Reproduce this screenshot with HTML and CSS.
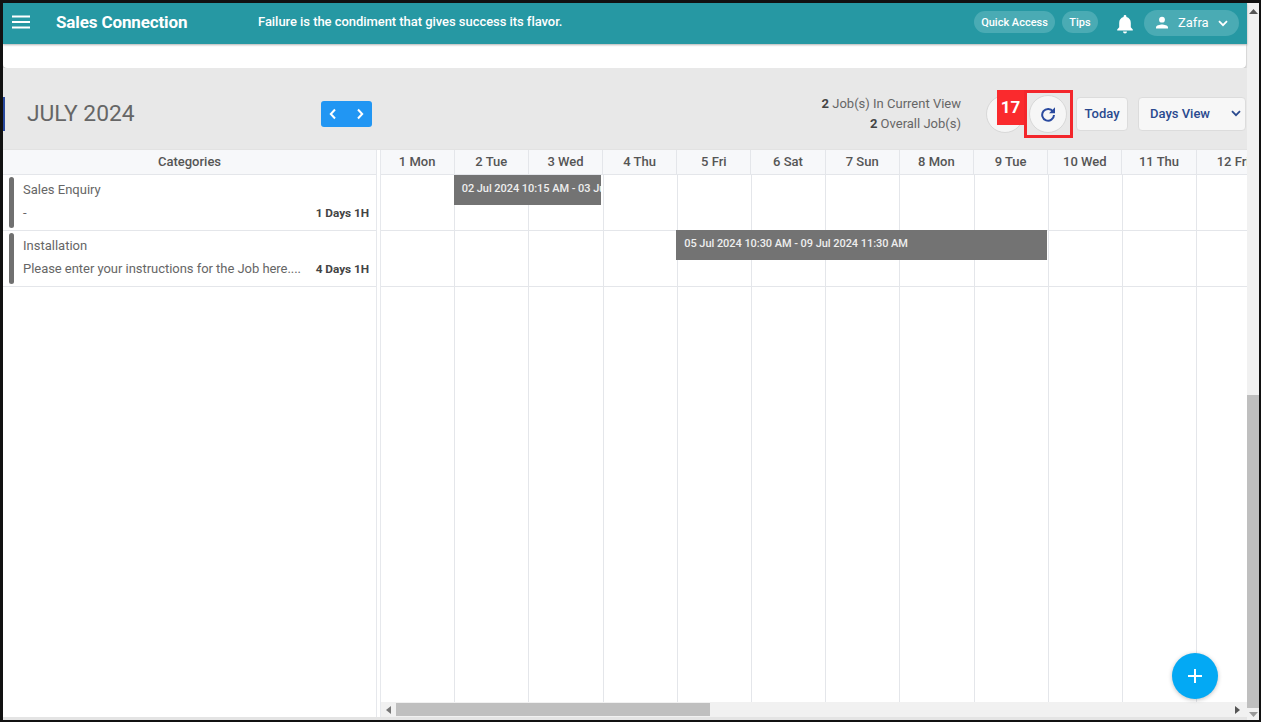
FILE: index.html
```html
<!DOCTYPE html>
<html lang="en">
<head>
<meta charset="UTF-8">
<title>Sales Connection</title>
<link rel="stylesheet" href="styles.css">
</head>
<body>

<div class="frame">
    <div class="page">
        <header class="topbar">
            <svg class="menu-icon" width="20" height="16" viewBox="0 0 20 16"><path d="M1 2.500h18M1 8h18M1 13.500h18" stroke="#fff" stroke-width="2"/></svg>
            <span class="brand">Sales Connection</span>
            <span class="quote">Failure is the condiment that gives success its flavor.</span>
            <span class="pill quick">Quick Access</span>
            <span class="pill tips">Tips</span>
            <svg class="bell" width="18" height="20" viewBox="0 0 18 20"><path d="M9 1a1.400 1.400 0 0 1 1.400 1.400v.7c2.900.7 4.400 3 4.400 5.900v4.200L16.800 15.500v1H1.200v-1L3.200 13.200V9c0-2.900 1.500-5.200 4.400-5.900v-.7A1.400 1.400 0 0 1 9 1zM7 17.500h4a2 2 0 0 1-4 0z" fill="#fff"/></svg>
            <span class="user">
                <svg width="14" height="14" viewBox="0 0 14 14"><circle cx="7" cy="3.700" r="2.900" fill="#fff"/><path d="M1 12.500v-1.300C1 9.300 4.900 8.400 7 8.400s6 .9 6 2.800v1.300z" fill="#fff"/></svg>
                <span class="user-name">Zafra</span>
                <svg width="10" height="7" viewBox="0 0 10 7"><path d="M1 1.200l4 4 4-4" fill="none" stroke="#fff" stroke-width="1.800"/></svg>
            </span>
        </header>

        <div class="blank-card"></div>

        <div class="toolbar">
            <h1 class="month">JULY 2024</h1>
            <div class="nav-btns">
                <svg width="8" height="12" viewBox="0 0 8 12"><path d="M6 1.500L1.800 6 6 10.500" fill="none" stroke="#fff" stroke-width="2"/></svg>
                <svg width="8" height="12" viewBox="0 0 8 12"><path d="M2 1.500L6.200 6 2 10.500" fill="none" stroke="#fff" stroke-width="2"/></svg>
            </div>
            <div class="job-counts">
                <div><b>2</b> Job(s) In Current View</div>
                <div><b>2</b> Overall Job(s)</div>
            </div>
            <div class="round-btn first"></div>
            <div class="round-btn second">
                <svg width="16" height="16" viewBox="0 0 16 16"><path d="M13 5.500A5.900 5.900 0 1 0 14 9" fill="none" stroke="#2a4a9f" stroke-width="2"/><path d="M15 1.200v6H9z" fill="#2a4a9f"/></svg>
            </div>
            <div class="today">Today</div>
            <div class="view-select">
                <span>Days View</span>
                <svg width="10" height="7" viewBox="0 0 10 7"><path d="M1 1.200l4 4 4-4" fill="none" stroke="#2a4a8f" stroke-width="1.800"/></svg>
            </div>
            <div class="mark-box"></div>
            <div class="mark-num">17</div>
        </div>

        <div class="planner">
            <div class="categories">
                <div class="cat-head">Categories</div>
                <div class="cat-row">
                    <div class="cat-bar"></div>
                    <div class="cat-text">
                        <div class="cat-name">Sales Enquiry</div>
                        <div class="cat-line"><span>-</span><b>1 Days 1H</b></div>
                    </div>
                </div>
                <div class="cat-row">
                    <div class="cat-bar"></div>
                    <div class="cat-text">
                        <div class="cat-name">Installation</div>
                        <div class="cat-line"><span>Please enter your instructions for the Job here....</span><b>4 Days 1H</b></div>
                    </div>
                </div>
            </div>

            <div class="timeline">
                <div class="days">
                    <div>1 Mon</div><div>2 Tue</div><div>3 Wed</div><div>4 Thu</div>
                    <div>5 Fri</div><div>6 Sat</div><div>7 Sun</div><div>8 Mon</div>
                    <div>9 Tue</div><div>10 Wed</div><div>11 Thu</div><div>12 Fri</div>
                </div>
                <div class="grid-body">
                    <div class="job-row">
                        <div class="job job-one">02 Jul 2024 10:15 AM - 03 Jul 2024 11:15 AM</div>
                    </div>
                    <div class="job-row">
                        <div class="job job-two">05 Jul 2024 10:30 AM - 09 Jul 2024 11:30 AM</div>
                    </div>
                </div>
                <div class="hscroll">
                    <svg width="5" height="8" viewBox="0 0 5 8"><path d="M5 0v8L0 4z" fill="#777"/></svg>
                    <div class="hthumb"></div>
                    <svg class="hright" width="5" height="8" viewBox="0 0 5 8"><path d="M0 0v8l5-4z" fill="#555"/></svg>
                </div>
            </div>
        </div>
        <div class="add-btn">
            <svg width="16" height="16" viewBox="0 0 16 16"><path d="M8 1v14M1 8h14" stroke="#fff" stroke-width="2"/></svg>
        </div>
    </div>

    <div class="vscroll">
        <svg width="9" height="5" viewBox="0 0 9 5"><path d="M0 5h9L4.500 0z" fill="#555"/></svg>
        <div class="vtrack"><div class="vthumb"></div></div>
        <svg width="9" height="5" viewBox="0 0 9 5"><path d="M0 0h9L4.500 5z" fill="#999"/></svg>
    </div>
</div>

</body>
</html>
```

FILE: styles.css
```css
* {
    box-sizing: border-box;
}

body {
    margin: 0;
    background-color: white;
    font-family: Roboto, Arial, sans-serif;
    color: #555;
}

.frame {
    width: 1261px;
    height: 722px;
    border: 3px solid #111;
    border-right-width: 2px;
    border-bottom-width: 2px;
    display: flex;
    overflow: hidden;
    background-color: white;
}

.page {
    width: 1244px;
    position: relative;
    display: flex;
    flex-direction: column;
    padding-bottom: 3px;
    background-color: #e4e4e4;
}

/* top bar */
.topbar {
    height: 41px;
    flex: none;
    background-color: #2698a3;
    color: white;
    display: flex;
    align-items: center;
    box-shadow: 0 1px 2px rgba(0, 0, 0, 0.3);
    position: relative;
    z-index: 1;
}

.menu-icon {
    margin-left: 8px;
    margin-bottom: 3px;
}

.brand {
    margin-left: 25px;
    margin-bottom: 3px;
    font-size: 17px;
    font-weight: 700;
    letter-spacing: -0.13px;
    width: 202px;
}

.quote {
    margin-bottom: 4px;
    font-size: 13px;
    font-weight: 500;
    letter-spacing: -0.05px;
    flex: 1;
}

.pill {
    height: 22px;
    margin-bottom: 3px;
    border-radius: 11px;
    background-color: #4aabb4;
    font-size: 11px;
    font-weight: 500;
    display: flex;
    align-items: center;
    justify-content: center;
}

.quick {
    width: 81px;
}

.tips {
    width: 36px;
    margin-left: 7px;
}

.bell {
    margin-left: 18px;
}

.user {
    margin-left: 10px;
    margin-right: 8px;
    margin-bottom: 1px;
    width: 95px;
    height: 26px;
    border-radius: 13px;
    background-color: #4aabb4;
    display: flex;
    align-items: center;
    padding-left: 11px;
}

.user-name {
    margin-left: 9px;
    margin-right: 8px;
    padding-bottom: 2px;
    font-size: 13px;
    width: 32px;
}

.blank-card {
    height: 24px;
    flex: none;
    background-color: white;
    margin-right: 1px;
    border-radius: 0 0 4px 4px;
    box-shadow: 0 1px 2px rgba(0, 0, 0, 0.2);
    position: relative;
}

/* toolbar */
.toolbar {
    height: 82px;
    flex: none;
    background-color: #e8e8e8;
    display: flex;
    align-items: center;
    position: relative;
    border-bottom: 1px solid #e2e2e2;
    padding: 10px 1px 0 0;
}

.toolbar::before {
    content: "";
    width: 2px;
    height: 34px;
    background-color: #2a4a9f;
}

.month {
    margin: 0 0 0 22px;
    width: 294px;
    font-size: 22.800px;
    font-weight: 400;
    color: #666;
}

.nav-btns {
    width: 51px;
    height: 26px;
    border-radius: 3px;
    background-color: #2196f3;
    display: flex;
    align-items: center;
    justify-content: space-between;
    padding: 0 8px;
}

.job-counts {
    margin-left: auto;
    font-size: 13px;
    line-height: 20px;
    text-align: right;
    color: #666;
}

.job-counts b {
    color: #444;
}

.round-btn {
    width: 38px;
    height: 38px;
    border-radius: 50%;
    background-color: #f6f6f6;
    border: 1px solid #d8d8d8;
    display: flex;
    align-items: center;
    justify-content: center;
}

.first {
    margin-left: 25px;
}

.second {
    margin-left: 5px;
}

.today {
    margin-left: 9px;
    width: 52px;
    height: 34px;
    border-radius: 4px;
    background-color: #f7f7f7;
    border: 1px solid #dcdcdc;
    color: #2a4a8f;
    font-size: 13px;
    font-weight: 500;
    display: flex;
    align-items: center;
    justify-content: center;
}

.view-select {
    margin-left: 10px;
    width: 108px;
    height: 34px;
    border-radius: 4px;
    background-color: #f7f7f7;
    border: 1px solid #dcdcdc;
    color: #2a4a8f;
    font-size: 13px;
    font-weight: 500;
    display: flex;
    align-items: center;
    justify-content: space-between;
    padding: 0 4px 0 11px;
}

.mark-box {
    position: absolute;
    left: 1021px;
    top: 22px;
    width: 49px;
    height: 48px;
    border: 3px solid #f3262b;
}

.mark-num {
    position: absolute;
    left: 994px;
    top: 22px;
    width: 27px;
    height: 35px;
    padding-bottom: 2px;
    background-color: #fa2a2d;
    color: white;
    font-size: 17px;
    font-weight: 700;
    display: flex;
    align-items: center;
    justify-content: center;
}

/* planner */
.planner {
    flex: 1;
    min-height: 0;
    display: flex;
    background-color: white;
}

.categories {
    width: 374px;
    flex: none;
    margin-right: 2.500px;
    border-right: 1px solid #e6e8ec;
}

.cat-head {
    height: 25px;
    padding-bottom: 2px;
    background-color: #f7f8fa;
    border-bottom: 1px solid #e4e6ea;
    font-size: 13px;
    font-weight: 500;
    display: flex;
    align-items: center;
    justify-content: center;
}

.cat-row {
    height: 56px;
    border-bottom: 1px solid #e4e6ea;
    display: flex;
    padding: 2px 0 2px 6px;
}

.cat-bar {
    width: 5px;
    border-radius: 3px;
    background-color: #707070;
}

.cat-text {
    flex: 1;
    padding: 0 7px 0 9px;
    font-size: 13px;
    color: #666;
    min-width: 0;
}

.cat-name {
    line-height: 25px;
}

.cat-line {
    margin-top: 1px;
    line-height: 20px;
    letter-spacing: -0.04px;
    display: flex;
    justify-content: space-between;
    white-space: nowrap;
}

.cat-line b {
    font-size: 11.800px;
    font-weight: 700;
    color: #444;
}

.timeline {
    flex: 1;
    min-width: 0;
    display: flex;
    flex-direction: column;
    border-left: 1px solid #e6e8ec;
}

.days {
    height: 25px;
    flex: none;
    display: grid;
    grid-template-columns: repeat(12, 74.2px);
    background-color: #f7f8fa;
    border-bottom: 1px solid #e4e6ea;
    overflow: hidden;
}

.days div {
    font-size: 13px;
    font-weight: 500;
    padding-bottom: 2px;
    white-space: nowrap;
    border-right: 1px solid #e4e6ea;
    display: flex;
    align-items: center;
    justify-content: center;
}

.grid-body {
    flex: 1;
    overflow: hidden;
    background-image: repeating-linear-gradient(to right, transparent 0, transparent 73.2px, #e4e6ea 73.2px, #e4e6ea 74.2px);
}

.job-row {
    height: 56px;
    border-bottom: 1px solid #e4e6ea;
    display: grid;
    grid-template-columns: repeat(12, 74.2px);
}

.job {
    height: 30px;
    margin: 0 1.500px 0 -1px;
    background-color: #737373;
    color: #eee;
    font-size: 11px;
    font-weight: 500;
    letter-spacing: -0.05px;
    padding-left: 8px;
    white-space: nowrap;
    overflow: hidden;
}

.job-one {
    grid-column: 2 / 4;
    margin-right: 2px;
    line-height: 28px;
}

.job-two {
    grid-column: 5 / 10;
    margin-top: -1px;
    line-height: 27px;
}

.hscroll {
    height: 15px;
    flex: none;
    background-color: #f1f1f1;
    display: flex;
    align-items: center;
    padding-left: 5px;
}

.hthumb {
    margin-left: 5px;
    width: 314px;
    height: 13px;
    background-color: #bfbfbf;
}

.hright {
    margin-left: auto;
    margin-right: 7px;
}

.add-btn {
    position: absolute;
    right: 29px;
    bottom: 21px;
    width: 46px;
    height: 46px;
    border-radius: 50%;
    background-color: #03a9f4;
    box-shadow: 0 1px 4px rgba(0, 0, 0, 0.25);
    display: flex;
    align-items: center;
    justify-content: center;
}

/* page scrollbar */
.vscroll {
    flex: 1;
    background-color: #f1f1f1;
    display: flex;
    flex-direction: column;
    align-items: center;
    padding: 6px 0 3px;
}

.vtrack {
    flex: 1;
    width: 100%;
    display: flex;
    flex-direction: column;
    justify-content: flex-end;
    padding: 4px 0;
}

.vthumb {
    height: 313px;
    background-color: #bfbfbf;
}
```
